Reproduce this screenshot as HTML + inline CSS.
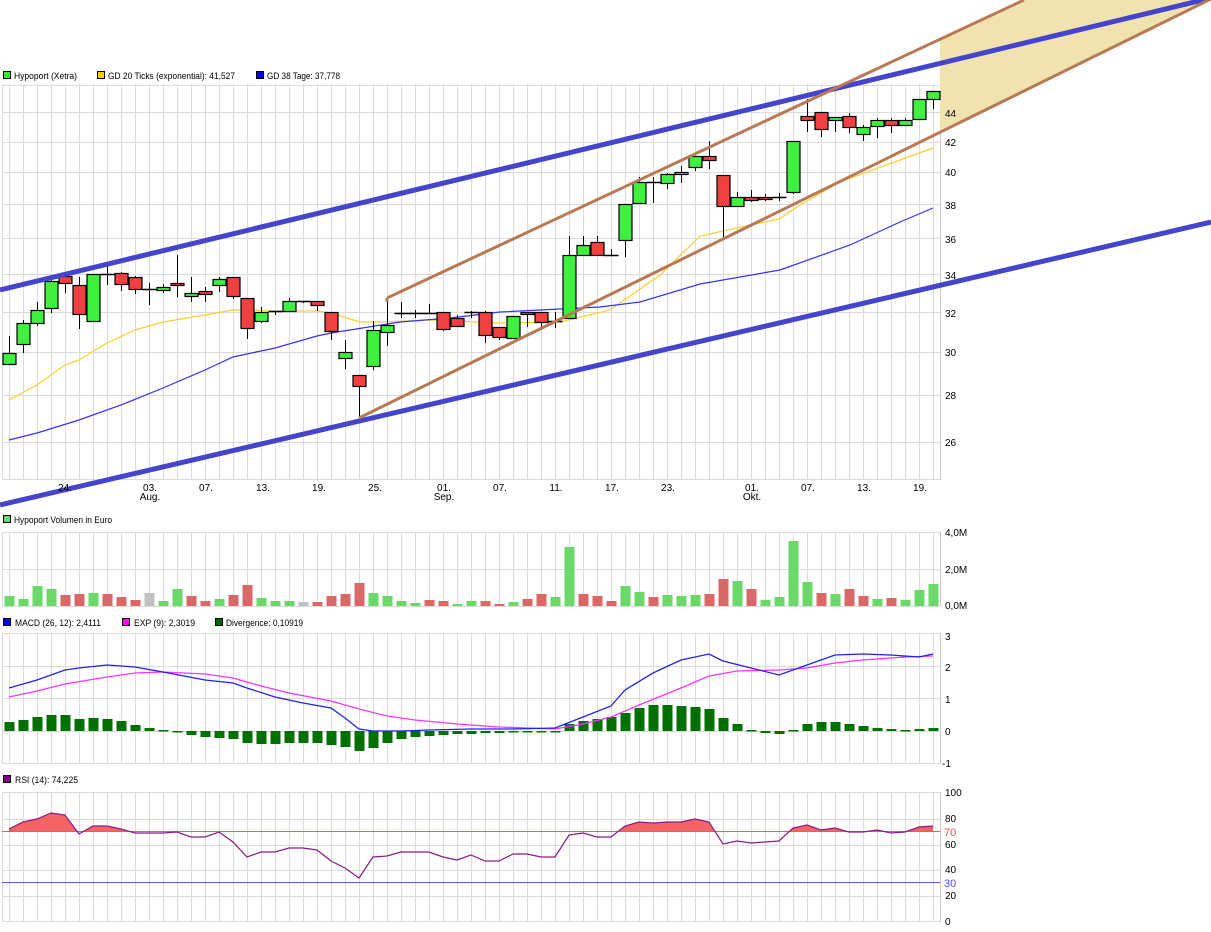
<!DOCTYPE html>
<html><head><meta charset="utf-8"><style>
html,body{margin:0;padding:0;background:#fff;width:1211px;height:932px;overflow:hidden}
svg{display:block}
text{font-family:"Liberation Sans",sans-serif;font-size:10px;fill:#000}
.lg{font-size:9.5px}
</style></head><body>
<svg id="s" width="1211" height="932" xmlns="http://www.w3.org/2000/svg">
<g id="grid"></g>
<polygon points="940,39 1024,0 1209,0 940,132" fill="#f0e3b0"/>
<g id="ma"></g>
<g id="candles"></g>
<g id="trend"></g>
<g id="vol"></g>
<g id="macd"></g>
<g id="rsi"></g>
<!-- legends -->
<rect x="3.5" y="71.5" width="7" height="7" fill="#33ee33" stroke="#000"/><text class="lg" x="14" y="79" textLength="63" lengthAdjust="spacingAndGlyphs">Hypoport (Xetra)</text>
<rect x="97.5" y="71.5" width="7" height="7" fill="#ffcc00" stroke="#000"/><text class="lg" x="108" y="79" textLength="127" lengthAdjust="spacingAndGlyphs">GD 20 Ticks (exponential): 41,527</text>
<rect x="256.5" y="71.5" width="7" height="7" fill="#0000ee" stroke="#000"/><text class="lg" x="267" y="79" textLength="73" lengthAdjust="spacingAndGlyphs">GD 38 Tage: 37,778</text>
<rect x="3.5" y="515.5" width="7" height="7" fill="#66dd66" stroke="#000"/><text class="lg" x="14" y="523" textLength="98" lengthAdjust="spacingAndGlyphs">Hypoport Volumen in Euro</text>
<rect x="3.5" y="618.5" width="7" height="7" fill="#0000ee" stroke="#000"/><text class="lg" x="15" y="626" textLength="86" lengthAdjust="spacingAndGlyphs">MACD (26, 12): 2,4111</text>
<rect x="122.5" y="618.5" width="7" height="7" fill="#ff00ff" stroke="#000"/><text class="lg" x="134" y="626" textLength="61" lengthAdjust="spacingAndGlyphs">EXP (9): 2,3019</text>
<rect x="215.5" y="618.5" width="7" height="7" fill="#006400" stroke="#000"/><text class="lg" x="226" y="626" textLength="77" lengthAdjust="spacingAndGlyphs">Divergence: 0,10919</text>
<rect x="3.5" y="775.5" width="7" height="7" fill="#800080" stroke="#000"/><text class="lg" x="15" y="783" textLength="63" lengthAdjust="spacingAndGlyphs">RSI (14): 74,225</text>
<!-- main y labels -->
<g>
<text x="945" y="117">44</text><text x="945" y="146">42</text><text x="945" y="176">40</text><text x="945" y="209">38</text><text x="945" y="243">36</text><text x="945" y="279">34</text><text x="945" y="317">32</text><text x="945" y="356">30</text><text x="945" y="399">28</text><text x="945" y="446">26</text>
</g>
<!-- x labels -->
<g text-anchor="middle">
<text x="65" y="491">24.</text><text x="150" y="491">03.</text><text x="150" y="500">Aug.</text><text x="206" y="491">07.</text><text x="263" y="491">13.</text><text x="319" y="491">19.</text><text x="375" y="491">25.</text><text x="444" y="491">01.</text><text x="444" y="500">Sep.</text><text x="500" y="491">07.</text><text x="556" y="491">11.</text><text x="612" y="491">17.</text><text x="668" y="491">23.</text><text x="752" y="491">01.</text><text x="752" y="500">Okt.</text><text x="808" y="491">07.</text><text x="864" y="491">13.</text><text x="920" y="491">19.</text>
</g>
<text x="945" y="536">4,0M</text><text x="945" y="573">2,0M</text><text x="945" y="609">0,0M</text>
<text x="945" y="640">3</text><text x="945" y="671">2</text><text x="945" y="703">1</text><text x="945" y="735">0</text><text x="942" y="767">-1</text>
<text x="945" y="796">100</text><text x="945" y="822">80</text><text x="944" y="836" style="fill:#f05050;font-size:11px">70</text><text x="945" y="848">60</text><text x="945" y="873">40</text><text x="944" y="887" style="fill:#5050ff;font-size:11px">30</text><text x="945" y="899">20</text><text x="945" y="925">0</text>
</svg>
<script>
var NS="http://www.w3.org/2000/svg";
function el(p,t,a){var e=document.createElementNS(NS,t);for(var k in a)e.setAttribute(k,a[k]);document.getElementById(p).appendChild(e);return e;}
var X=function(k){return 9.5+14*k;};
function panel(y0,y1,hs){
 for(var k=0;k<67;k++)el("grid","line",{x1:X(k),x2:X(k),y1:y0,y2:y1,stroke:"#dcdcdc"});
 hs.forEach(function(y){el("grid","line",{x1:2,x2:940,y1:y,y2:y,stroke:"#dcdcdc"});});
 el("grid","line",{x1:2.5,x2:2.5,y1:y0,y2:y1,stroke:"#dcdcdc"});
 el("grid","line",{x1:940.5,x2:940.5,y1:y0,y2:y1,stroke:"#c8c8c8"});
}
panel(84,480,[85.5,112.5,142.5,172.5,204.5,238.5,274.5,312.5,352.5,395.5,442.5,479.5]);
panel(532,606,[532.5,569.5,606.5]);
panel(633,764,[633.5,666.5,698.5,731.5,763.5]);
panel(792,922,[792.5,819.5,845.5,870.5,896.5,921.5]);
function pl(g,pts,st,w,extra){var a={points:pts.map(function(p){return p.join(",")}).join(" "),fill:"none",stroke:st,"stroke-width":w};for(var k in extra)a[k]=extra[k];return el(g,"polyline",a);}
pl("ma",[[9,400],[37,385],[65,365],[79,360],[107,343],[135,330],[163,322],[205,315],[233,310],[247,310],[275,311],[317,311],[331,313],[360,322],[380,322],[430,320],[500,323],[560,322],[610,310],[660,275],[700,236],[737,228],[779,219],[800,205],[840,182],[900,160],[933,148]],"#ffcc33",1.2);
pl("ma",[[9,440],[37,433],[79,420],[121,405],[163,388],[205,370],[233,357],[275,348],[317,336],[331,333],[400,322],[450,318],[500,312],[560,309],[600,307],[640,302],[700,284],[780,270],[850,245],[900,222],[933,208]],"#3333ff",1.2);
var C=[["g",353,364,336,364],["g",323,344,320,353],["g",310,323,302,326],["g",281,308,279,313],["r",276,283,276,293],["r",285,314,277,329],["g",274,321,274,321],["d",274,274,266,285],["r",273,284,272,291],["r",277,289,276,294],["d",289,289,283,305],["g",287,290,284,293],["r",283,285,255,297],["g",293,296,277,302],["r",291,294,287,302],["g",279,285,277,292],["r",277,296,277,299],["r",298,328,298,339],["g",312,321,307,323],["d",311,311,311,315],["g",301,311,298,311],["d",301,301,301,303],["r",301,305,301,311],["r",312,331,312,340],["g",352,358,340,369],["r",375,386,375,418],["g",330,366,321,370],["g",325,332,298,346],["d",313,313,302,318],["d",313,313,310,318],["d",313,313,304,313],["r",312,329,312,331],["r",318,326,315,326],["d",312,312,311,318],["r",312,335,311,343],["r",327,337,327,340],["g",316,338,316,338],["r",312,314,312,327],["r",312,322,312,330],["d",321,321,312,328],["g",255,318,236,318],["g",245,255,236,255],["r",242,255,236,255],["d",255,255,249,255],["g",204,240,204,257],["g",182,203,177,203],["d",182,182,177,203],["g",174,183,173,189],["g",172,174,166,183],["g",156,167,156,171],["r",156,160,141,169],["r",175,206,175,239],["g",197,206,192,206],["r",197,200,190,202],["r",197,198,194,201],["d",197,197,193,201],["g",141,192,141,194],["r",116,120,99,132],["r",112,129,112,137],["g",117,120,117,132],["r",116,127,113,133],["g",127,134,125,141],["g",120,126,118,138],["r",120,125,118,133],["g",120,125,118,125],["g",99,119,99,120],["g",91,99,91,109]];
C.forEach(function(c,k){var x=X(k);
 el("candles","line",{x1:x,x2:x,y1:c[3],y2:c[4],stroke:"#000"});
 if(c[0]=="d"){el("candles","line",{x1:x-7,x2:x+7,y1:c[1]+.5,y2:c[1]+.5,stroke:"#000","stroke-width":1.5});}
 else el("candles","rect",{x:x-6.5,y:c[1]+.5,width:13,height:Math.max(c[2]-c[1],2),fill:c[0]=="g"?"#3ff03f":"#f04040",stroke:"#000","stroke-width":1.2});
});
el("trend","line",{x1:0,y1:290,x2:1211,y2:-2,stroke:"#4444cc","stroke-width":5});
el("trend","line",{x1:0,y1:505,x2:1211,y2:222,stroke:"#4444cc","stroke-width":5});
el("trend","line",{x1:387,y1:298,x2:1024,y2:0,stroke:"#b87a55","stroke-width":3});
el("trend","line",{x1:359,y1:418,x2:1211,y2:-1,stroke:"#b87a55","stroke-width":3});
el("trend","line",{x1:387,y1:298,x2:387,y2:302,stroke:"#b87a55","stroke-width":3});
var V=[596,599,586,589,595,594,593,594,597,600,593,601,589,596,601,599,595,585,598,601,601,602,602,596,594,583,593,596,601,603,600,601,604,601,601,604,602,599,594,597,547,594,596,601,586,592,597,595,596,595,594,579,581,589,600,597,541,582,593,594,589,596,599,598,600,590,584];
var VC=["g","g","g","g","r","r","g","r","r","r","x","g","g","r","r","g","r","r","g","g","g","x","r","r","r","r","g","g","g","g","r","r","g","g","r","r","g","r","r","g","g","r","r","r","g","g","r","g","g","g","r","r","g","r","g","g","g","g","r","g","r","r","g","r","g","g","g"];
V.forEach(function(v,k){el("vol","rect",{x:X(k)-5,y:v,width:10,height:606-v,fill:VC[k]=="g"?"#6ad96a":VC[k]=="r"?"#d96868":"#c0c0c0"});});
var D=[722,720,717,715,715,719,718,719,721,725,728,730,732,735,737,738,739,743,744,744,743,743,743,745,747,751,748,743,739,737,736,735,734,734,733,733,732,732,731,731,724,721,719,717,713,708,705,705,706,707,709,718,724,730,733,734,730,724,722,722,724,726,728,729,730,729,728];
D.forEach(function(d,k){var y0=Math.min(d,731),h=Math.max(Math.abs(d-731),1.5);el("macd","rect",{x:X(k)-5,y:y0,width:10,height:h,fill:"#007000"});});
pl("macd",[[9,697],[37,691],[65,684],[107,677],[135,673],[163,672],[205,674],[233,678],[261,686],[289,693],[331,701],[359,709],[387,716],[415,720],[457,724],[499,727],[555,729],[583,724],[611,717],[639,705],[681,688],[709,676],[737,671],[779,670],[807,668],[835,663],[863,660],[905,657],[933,656]],"#ff33ff",1.3);
pl("macd",[[9,688],[37,680],[65,670],[79,668],[107,665],[135,667],[163,672],[205,680],[233,683],[247,688],[275,697],[303,703],[331,708],[345,718],[359,729],[373,731],[401,731],[429,730],[471,729],[513,729],[555,728],[583,717],[611,706],[625,690],[653,673],[681,660],[709,654],[723,661],[751,668],[779,675],[807,665],[835,655],[863,654],[891,655],[919,657],[933,654]],"#2222ee",1.3);
var R=[[9,829],[23,822],[37,819],[51,813],[65,815],[79,834],[93,826],[107,826],[121,829],[135,833],[163,833],[177,832],[191,837],[205,837],[219,832],[233,842],[247,857],[261,852],[275,852],[289,848],[303,848],[317,850],[331,861],[345,868],[359,878],[373,857],[387,856],[401,852],[415,852],[429,852],[443,857],[457,860],[471,855],[485,861],[499,861],[513,854],[527,854],[541,857],[555,857],[569,835],[583,833],[597,837],[611,837],[625,826],[639,822],[653,823],[667,822],[681,822],[695,819],[709,822],[723,844],[737,841],[751,843],[765,842],[779,841],[793,828],[807,825],[821,830],[835,828],[849,832],[863,832],[877,830],[891,833],[905,832],[919,827],[933,826]];
var cp=el("rsi","clipPath",{id:"cp"});var cr=document.createElementNS(NS,"rect");cr.setAttribute("x",0);cr.setAttribute("y",780);cr.setAttribute("width",941);cr.setAttribute("height",51);cp.appendChild(cr);
var poly=[[9,831]].concat(R).concat([[933,831]]);
el("rsi","polygon",{points:poly.map(function(p){return p.join(",")}).join(" "),fill:"#f46464","clip-path":"url(#cp)"});
el("rsi","line",{x1:2,x2:940,y1:831.5,y2:831.5,stroke:"#e06060"});
el("rsi","line",{x1:2,x2:940,y1:882.5,y2:882.5,stroke:"#6060ff"});
pl("rsi",R,"#8a1a8a",1.2);
</script>
</body></html>
